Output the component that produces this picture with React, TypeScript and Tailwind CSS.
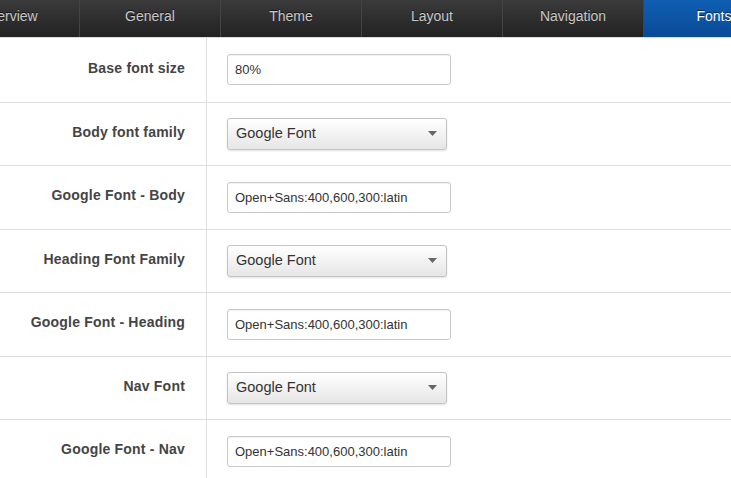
import React from 'react';

const TABS = ['Overview', 'General', 'Theme', 'Layout', 'Navigation', 'Fonts'];

const ROWS: { label: string; kind: 'text' | 'select'; value: string }[] = [
  { label: 'Base font size', kind: 'text', value: '80%' },
  { label: 'Body font family', kind: 'select', value: 'Google Font' },
  { label: 'Google Font - Body', kind: 'text', value: 'Open+Sans:400,600,300:latin' },
  { label: 'Heading Font Family', kind: 'select', value: 'Google Font' },
  { label: 'Google Font - Heading', kind: 'text', value: 'Open+Sans:400,600,300:latin' },
  { label: 'Nav Font', kind: 'select', value: 'Google Font' },
  { label: 'Google Font - Nav', kind: 'text', value: 'Open+Sans:400,600,300:latin' },
];

export default function App() {
  return (
    <div className="w-[731px] h-[478px] overflow-hidden bg-white" style={{ fontFamily: '"Liberation Sans", Arial, sans-serif' }}>
      {/* Tabs */}
      <div className="h-[37px] overflow-hidden bg-gradient-to-b from-[#3b3b3b] to-[#222]">
        <div className="flex ml-[-62px] w-[846px] h-full">
          {TABS.map((t, i) => {
            const active = t === 'Fonts';
            return (
              <div
                key={t}
                className={`w-[141px] shrink-0 h-full flex items-center justify-center pb-[4px] text-[14px] ${i > 0 ? 'border-l border-[#444]' : ''} ${
                  active ? 'bg-gradient-to-b from-[#0f5fb3] to-[#0a4a96] text-white' : 'text-[#c8c8c8]'
                }`}
                style={{ textShadow: '0 -1px 0 rgba(0,0,0,0.6)' }}>
                {t}
              </div>
            );
          })}
        </div>
      </div>
      <div className="h-[1px] bg-[#dcdcdc]" />

      {/* Rows */}
      <div>
        {ROWS.map((r, i) => (
          <div key={r.label} className={`flex h-[63.5px] ${i > 0 ? 'border-t border-[#dedede]' : ''}`}>
            <div className="w-[207px] shrink-0 border-r border-[#dedede] flex items-center justify-end pr-[21px] pb-[3px]">
              <span className="text-[14px] font-bold text-[#444] tracking-[0.2px]">{r.label}</span>
            </div>
            <div className="flex items-center pl-[20px]">
              {r.kind === 'text' ? (
                <div className="w-[224px] h-[31px] border border-[#c9c9c9] rounded-[3px] bg-white flex items-center px-[7px] text-[13px] text-[#333] shadow-[inset_0_1px_1px_rgba(0,0,0,0.06)]">
                  {r.value}
                </div>
              ) : (
                <div className="w-[220px] h-[32px] border border-[#c4c4c4] rounded-[3px] bg-gradient-to-b from-white to-[#e6e6e6] flex items-center justify-between pl-[8px] pr-[9px] text-[14.5px] text-[#333] shadow-[0_1px_2px_rgba(0,0,0,0.12)]">
                  <span>{r.value}</span>
                  <svg width="9" height="5" viewBox="0 0 9 5">
                    <path d="M0 0h9L4.5 5z" fill="#666" />
                  </svg>
                </div>
              )}
            </div>
          </div>
        ))}
      </div>
    </div>
  );
}
